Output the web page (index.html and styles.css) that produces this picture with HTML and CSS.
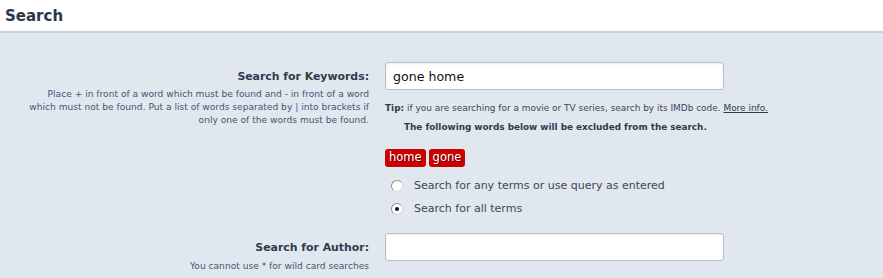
FILE: index.html
```html
<!DOCTYPE html>
<html lang="en">
<head>
    <meta charset="UTF-8">
    <title>Search</title>
    <link rel="stylesheet" href="styles.css">
</head>
<body>
    <div class="page-title">
        <h1>Search</h1>
    </div>

    <div class="search-panel">
        <div class="form-row">
            <div class="form-label">
                <label for="keywords">Search for Keywords:</label>
                <p class="help">Place + in front of a word which must be found and - in front of a word<br>which must not be found. Put a list of words separated by <span class="pipe">|</span> into brackets if<br>only one of the words must be found.</p>
            </div>
            <div class="form-field">
                <input type="text" id="keywords" value="gone home">
                <p class="tip"><b>Tip:</b> if you are searching for a movie or TV series, search by its IMDb code. <a href="#">More info.</a></p>
                <p class="excluded">The following words below will be excluded from the search.</p>
                <div class="tags">
                    <span class="tag">home</span>
                    <span class="tag">gone</span>
                </div>
                <label class="radio"><input type="radio" name="terms"> Search for any terms or use query as entered</label>
                <label class="radio"><input type="radio" name="terms" checked> Search for all terms</label>
            </div>
        </div>

        <div class="form-row author-row">
            <div class="form-label">
                <label for="author">Search for Author:</label>
                <p class="help">You cannot use * for wild card searches</p>
            </div>
            <div class="form-field">
                <input type="text" id="author">
            </div>
        </div>
    </div>
</body>
</html>
```

FILE: styles.css
```css
* {
    margin: 0;
    padding: 0;
    box-sizing: border-box;
}

body {
    font-family: "DejaVu Sans", Verdana, sans-serif;
    color: #2f3b4c;
    background: white;
}

.page-title {
    height: 31px;
    padding: 7px 5px 0;
}

.page-title h1 {
    font-size: 15px;
    font-weight: bold;
    color: #2b3748;
}

.search-panel {
    background: #e1e7ef;
    border-top: 2px solid #c9d2dc;
    min-height: 247px;
    padding-top: 29px;
}

.form-row {
    display: grid;
    grid-template-columns: 369px 1fr;
    column-gap: 16px;
}

.form-label {
    text-align: right;
    padding-top: 3px;
}

.form-label label {
    font-size: 10.9px;
    font-weight: bold;
    color: #2f3b4c;
}

.help {
    font-size: 9.1px;
    line-height: 13px;
    color: #44566f;
    margin-top: 4px;
    white-space: nowrap;
}

.pipe {
    color: #2a62b0;
}

input[type="text"] {
    display: block;
    width: 339px;
    height: 28px;
    border: 1px solid #b8bec6;
    border-radius: 3px;
    background: white;
    box-shadow: inset 0 1px 2px rgba(0, 0, 0, 0.08);
    font-family: "DejaVu Sans", Verdana, sans-serif;
    font-size: 12.6px;
    color: #111;
    padding: 0 7px;
}

.tip {
    font-size: 8.95px;
    color: #3b4658;
    margin-top: 13px;
    white-space: nowrap;
}

.tip b,
.tip a {
    color: #2f3b4c;
}

.excluded {
    font-size: 8.85px;
    font-weight: bold;
    color: #2f3b4c;
    padding-left: 19px;
    margin-top: 9px;
}

.tags {
    display: flex;
    gap: 3px;
    margin-top: 17px;
}

.tag {
    background: #cc0000;
    color: white;
    font-size: 11.5px;
    padding: 1px 4px 2px;
    border-radius: 3px;
    line-height: 15px;
    text-shadow: 1px 1px 0 rgba(0, 0, 0, 0.55);
}

.radio {
    display: flex;
    align-items: center;
    font-size: 11px;
    color: #3b4658;
    height: 23px;
    padding-left: 6px;
}

.radio:first-of-type {
    margin-top: 7px;
}

.radio input {
    appearance: none;
    width: 12px;
    height: 12px;
    border-radius: 50%;
    border: 1px solid #8a8f96;
    border-right-color: #d4d8dd;
    border-bottom-color: #d4d8dd;
    background: white;
    margin-right: 11px;
    position: relative;
}

.radio input:checked::after {
    content: "";
    position: absolute;
    left: 3px;
    top: 3px;
    width: 4px;
    height: 4px;
    border-radius: 50%;
    background: #111;
}

.author-row {
    margin-top: 13px;
}

.author-row .form-label {
    padding-top: 3px;
}

.author-row .help {
    margin-top: 5px;
}
```
